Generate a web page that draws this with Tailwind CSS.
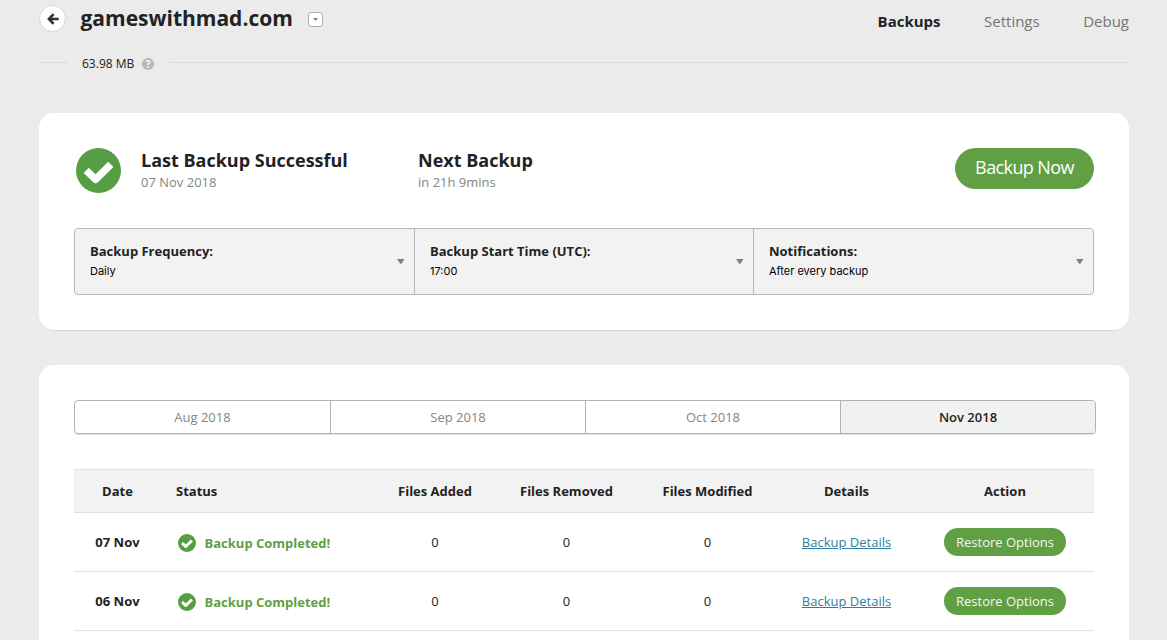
<!DOCTYPE html>
<html lang="en">
<head>
<meta charset="utf-8">
<title>Backups</title>
<script src="https://cdn.jsdelivr.net/npm/@tailwindcss/browser@4"></script>
</head>
<body class="h-[640px] overflow-hidden bg-[#ebebeb] px-[39px] pr-[38px] font-['Open_Sans',sans-serif] text-[13px] text-[#222]">
<svg class="hidden">
  <symbol id="check" viewBox="0 0 45 45"><circle cx="22.5" cy="22.5" r="22.5" fill="#569e43"/><path d="M10.2 22.4 L19.6 31.4 L34.8 16.4" fill="none" stroke="#fff" stroke-width="7.4" stroke-linejoin="round"/></symbol>
  <symbol id="caret" viewBox="0 0 8 5"><path d="M0 0h7.5L4.6 4.4q-.8.9-1.6 0z" fill="#808080"/></symbol>
</svg>

<header class="flex h-[41px] items-start">
  <button class="mt-[5px] flex size-[27px] items-center justify-center rounded-full border border-[#d6d6d6] bg-white">
    <svg class="size-3" viewBox="0 0 12 12" fill="none" stroke="#333" stroke-width="2.6"><path d="M6.6 1.2 1.9 6l4.7 4.8M2 6h9.7"/></svg>
  </button>
  <h1 class="ml-[14.5px] mt-[3px] w-[212.5px] whitespace-nowrap text-[21px] leading-[30px] font-bold">gameswithmad.com</h1>
  <button class="ml-[15px] mt-[12px] flex size-[15px] items-center justify-center rounded-[3px] border border-[#b0b0b0] bg-white"><svg class="h-[3px] w-[5px]" viewBox="0 0 5 3"><path d="M0 0h5L2.5 3z" fill="#808080"/></svg></button>
  <nav class="ml-auto mt-[10px] flex gap-[43.5px] text-[15px] leading-[22px] text-[#757575]">
    <a class="font-bold text-[#222]">Backups</a><a>Settings</a><a>Debug</a>
  </nav>
</header>

<div class="flex h-[43px] items-center text-[12px]">
  <div class="h-px w-7 bg-[#d9d9d9]"></div>
  <span class="ml-[15px] mt-[3px] w-[52px] whitespace-nowrap">63.98 MB</span>
  <span class="ml-2 mr-[15px] mt-[2px] flex size-3 items-center justify-center rounded-full bg-[#b7b7b7] text-[11px] leading-3 font-extrabold text-[#ebebeb]">?</span>
  <div class="h-px flex-1 bg-[#d9d9d9]"></div>
</div>

<section class="mt-[29px] h-[218px] rounded-[15px] border-b border-[#d2d2d2] bg-white px-[35px] pt-[35px]">
  <div class="flex h-20 items-start">
    <svg class="ml-[2px] size-[45px]"><use href="#check"/></svg>
    <div class="ml-5 w-[277px]">
      <h2 class="text-[18px] leading-[25px] font-bold">Last Backup Successful</h2>
      <p class="leading-[18px] text-[#858585]">07 Nov 2018</p>
    </div>
    <div>
      <h2 class="text-[18px] leading-[25px] font-bold">Next Backup</h2>
      <p class="leading-[18px] text-[#858585]">in 21h 9mins</p>
    </div>
    <button class="ml-auto h-[41px] w-[139px] rounded-full bg-[#609f44] pb-[2px] text-[18px] tracking-[-0.6px] text-white">Backup Now</button>
  </div>
  <div class="grid h-[67px] grid-cols-[340px_339px_1fr] rounded-[4px] border border-[#b9b9b9] bg-[#f2f2f2]">
    <div class="flex items-center justify-between border-r border-[#b9b9b9] pl-[15px] pr-[9px]">
      <div class="pb-[2px]"><p class="leading-[20px] font-bold">Backup Frequency:</p><p class="font-['Inter',sans-serif] text-[11px] leading-[20px] text-black">Daily</p></div>
      <svg class="h-[5px] w-2"><use href="#caret"/></svg>
    </div>
    <div class="flex items-center justify-between border-r border-[#b9b9b9] pl-[15px] pr-[9px]">
      <div class="pb-[2px]"><p class="leading-[20px] font-bold">Backup Start Time (UTC):</p><p class="font-['Inter',sans-serif] text-[11px] leading-[20px] text-black">17:00</p></div>
      <svg class="h-[5px] w-2"><use href="#caret"/></svg>
    </div>
    <div class="flex items-center justify-between pl-[15px] pr-[9px]">
      <div class="pb-[2px]"><p class="leading-[20px] font-bold">Notifications:</p><p class="font-['Inter',sans-serif] text-[11px] leading-[20px] text-black">After every backup</p></div>
      <svg class="h-[5px] w-2"><use href="#caret"/></svg>
    </div>
  </div>
</section>

<section class="mt-[34px] h-[275px] rounded-t-[15px] bg-white px-[35px] pt-[35px]">
  <div class="grid h-[34px] w-[1022px] grid-cols-[256px_255px_255px_1fr] overflow-hidden rounded-[4px] border border-[#b2b2b2] text-center leading-8 text-[#858585] shadow-[0_1px_0_#e2e2e2]">
    <div class="border-r border-[#b2b2b2]">Aug 2018</div>
    <div class="border-r border-[#b2b2b2]">Sep 2018</div>
    <div class="border-r border-[#b2b2b2]">Oct 2018</div>
    <div class="bg-[#f1f1f1] font-semibold text-[#222]">Nov 2018</div>
  </div>
  <div class="mt-[35px] w-[1020px] text-center">
    <div class="grid h-11 grid-cols-[87px_222px_104px_159px_123px_155px_162px] items-center border-y border-[#e0e0e0] bg-[#f2f2f2] pt-[2px] font-bold">
      <div>Date</div><div class="pl-[15px] text-left">Status</div><div>Files Added</div><div>Files Removed</div><div>Files Modified</div><div>Details</div><div>Action</div>
    </div>
    <div class="grid h-[59px] grid-cols-[87px_222px_104px_159px_123px_155px_162px] items-center border-b border-[#e0e0e0] pt-px">
      <div class="font-bold">07 Nov</div>
      <div class="flex items-center pt-[2px] pl-[17px] font-bold text-[#609f44]"><svg class="mr-[8.5px] mb-px size-[18px]"><use href="#check"/></svg>Backup Completed!</div>
      <div>0</div><div>0</div><div>0</div>
      <div><a class="text-[#2f80a0] underline">Backup Details</a></div>
      <div class="pb-px"><button class="h-7 w-[122px] rounded-full bg-[#609f44] pt-px text-[#f4f7f2]">Restore Options</button></div>
    </div>
    <div class="grid h-[59px] grid-cols-[87px_222px_104px_159px_123px_155px_162px] items-center border-b border-[#e0e0e0] pt-px">
      <div class="font-bold">06 Nov</div>
      <div class="flex items-center pt-[2px] pl-[17px] font-bold text-[#609f44]"><svg class="mr-[8.5px] mb-px size-[18px]"><use href="#check"/></svg>Backup Completed!</div>
      <div>0</div><div>0</div><div>0</div>
      <div><a class="text-[#2f80a0] underline">Backup Details</a></div>
      <div class="pb-px"><button class="h-7 w-[122px] rounded-full bg-[#609f44] pt-px text-[#f4f7f2]">Restore Options</button></div>
    </div>
  </div>
</section>
</body>
</html>
